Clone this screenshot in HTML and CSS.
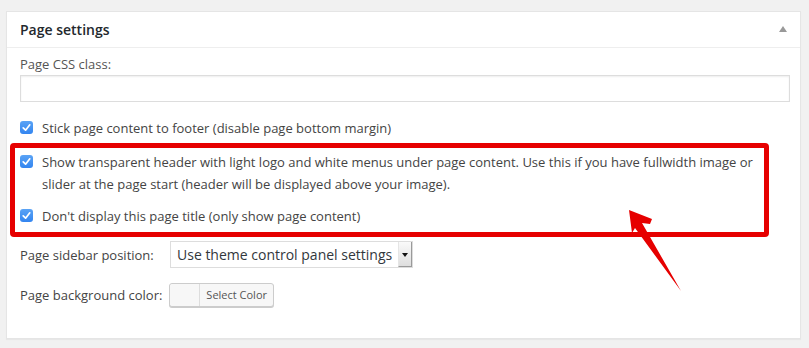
FILE: index.html
```html
<!DOCTYPE html>
<html lang="en">
<head>
  <meta charset="UTF-8">
  <title>Page settings</title>
  <link rel="stylesheet" href="styles.css">
</head>
<body>

  <div class="postbox">
    <div class="postbox-header">
      <h2>Page settings</h2>
      <span class="toggle-arrow"></span>
    </div>

    <div class="inside">
      <label class="field-label" for="css-class">Page CSS class:</label>
      <input type="text" id="css-class" class="text-input">

      <div class="check-row first">
        <span class="checkbox"><svg viewBox="0 0 13 13"><path d="M3.2 6.8 L5.6 9.2 L9.8 3.8" /></svg></span>
        <span>Stick page content to footer (disable page bottom margin)</span>
      </div>

      <!-- highlighted options -->
      <div class="highlight">
        <div class="check-row">
          <span class="checkbox"><svg viewBox="0 0 13 13"><path d="M3.2 6.8 L5.6 9.2 L9.8 3.8" /></svg></span>
          <span>Show transparent header with light logo and white menus under page content. Use this if you have fullwidth image or slider at the page start (header will be displayed above your image).</span>
        </div>
        <div class="check-row">
          <span class="checkbox"><svg viewBox="0 0 13 13"><path d="M3.2 6.8 L5.6 9.2 L9.8 3.8" /></svg></span>
          <span>Don't display this page title (only show page content)</span>
        </div>
      </div>

      <div class="option-row sidebar-row">
        <span class="option-label">Page sidebar position:</span>
        <div class="select-box">
          <span class="select-value">Use theme control panel settings</span>
          <span class="select-btn"></span>
        </div>
      </div>

      <div class="option-row color-row">
        <span class="option-label">Page background color:</span>
        <button class="color-btn">
          <span class="swatch"></span>
          <span class="color-text">Select Color</span>
        </button>
      </div>
    </div>
  </div>

  <svg class="pointer" width="809" height="348" viewBox="0 0 809 348">
    <polygon points="629,210 652,219 650,224 642,223 681,291 635,228 632,233" fill="#e60000" />
  </svg>

</body>
</html>
```

FILE: styles.css
```css
/* General Reset */
* {
  margin: 0;
  padding: 0;
  box-sizing: border-box;
}

body {
  font-family: 'Open Sans', sans-serif;
  font-size: 13px;
  background: #f1f1f1;
  color: #32373c;
  position: relative;
  width: 809px;
  height: 348px;
  overflow: hidden;
}

/* Meta box */
.postbox {
  margin: 11px 0 0 6px;
  width: 795px;
  height: 328px;
  background: #fff;
  border: 1px solid #e5e5e5;
  box-shadow: 0 1px 1px rgba(0, 0, 0, 0.04);
}

.postbox-header {
  display: flex;
  align-items: center;
  justify-content: space-between;
  height: 36px;
  padding: 0 13px;
  border-bottom: 1px solid #eee;
}

.postbox-header h2 {
  font-size: 14px;
  font-weight: 600;
  color: #23282d;
}

.toggle-arrow {
  width: 0;
  height: 0;
  border-left: 4px solid transparent;
  border-right: 4px solid transparent;
  border-bottom: 6px solid #999;
  margin-top: -2px;
}

.inside {
  padding: 7px 12px 0 13px;
}

.field-label {
  display: block;
  color: #555;
  line-height: 18px;
}

.text-input {
  display: block;
  width: 770px;
  height: 27px;
  margin-top: 2px;
  border: 1px solid #ddd;
  box-shadow: inset 0 1px 2px rgba(0, 0, 0, 0.07);
  background: #fff;
}

/* Checkbox rows */
.check-row {
  display: flex;
  align-items: flex-start;
  gap: 9px;
  line-height: 22px;
  color: #444;
}

.check-row.first {
  margin-top: 15px;
}

.checkbox {
  flex: none;
  width: 13px;
  height: 13px;
  margin-top: 4px;
  border-radius: 3px;
  background: linear-gradient(#5aa3f5, #3385f0);
  display: flex;
}

.checkbox svg {
  width: 13px;
  height: 13px;
}

.checkbox path {
  fill: none;
  stroke: #fff;
  stroke-width: 1.7;
  stroke-linecap: round;
  stroke-linejoin: round;
}

/* Red annotation box */
.highlight {
  margin: 4px 19px 0 -10px;
  border: 5px solid #e60000;
  border-radius: 4px;
  padding: 3px 5px 5px 5px;
  display: flex;
  flex-direction: column;
  gap: 10px;
}

/* Select + color rows */
.option-row {
  display: flex;
  align-items: center;
  color: #444;
}

.option-label {
  width: 150px;
  color: #444;
}

.sidebar-row {
  margin-top: 4px;
}

.select-box {
  display: flex;
  align-items: stretch;
  width: 243px;
  height: 27px;
  border: 1px solid #ddd;
  background: #fff;
}

.select-value {
  flex: 1;
  font-size: 14px;
  line-height: 25px;
  padding-left: 6px;
  color: #32373c;
}

.select-btn {
  width: 14px;
  background: linear-gradient(#fafafa, #dedede);
  border-left: 1px solid #e5e5e5;
  border-right: 1px solid #9a9a9a;
  border-bottom: 1px solid #9a9a9a;
  position: relative;
}

.select-btn::after {
  content: "";
  position: absolute;
  left: 3px;
  top: 11px;
  border-left: 3px solid transparent;
  border-right: 3px solid transparent;
  border-top: 4px solid #111;
}

.color-row {
  margin-top: 15px;
}

.color-row .option-label {
  width: auto;
  margin-right: 7px;
}

.color-btn {
  display: flex;
  align-items: stretch;
  height: 24px;
  border: 1px solid #ccc;
  border-radius: 3px;
  background: #f7f7f7;
  box-shadow: 0 1px 0 #ccc;
  font-family: 'Open Sans', sans-serif;
  cursor: pointer;
}

.swatch {
  width: 30px;
  background: #f7f7f7;
  border-right: 1px solid #ddd;
  border-radius: 3px 0 0 3px;
}

.color-text {
  font-size: 11px;
  line-height: 22px;
  padding: 0 6px;
  color: #555;
}

/* Arrow annotation */
.pointer {
  position: absolute;
  top: 0;
  left: 0;
  pointer-events: none;
}
```
